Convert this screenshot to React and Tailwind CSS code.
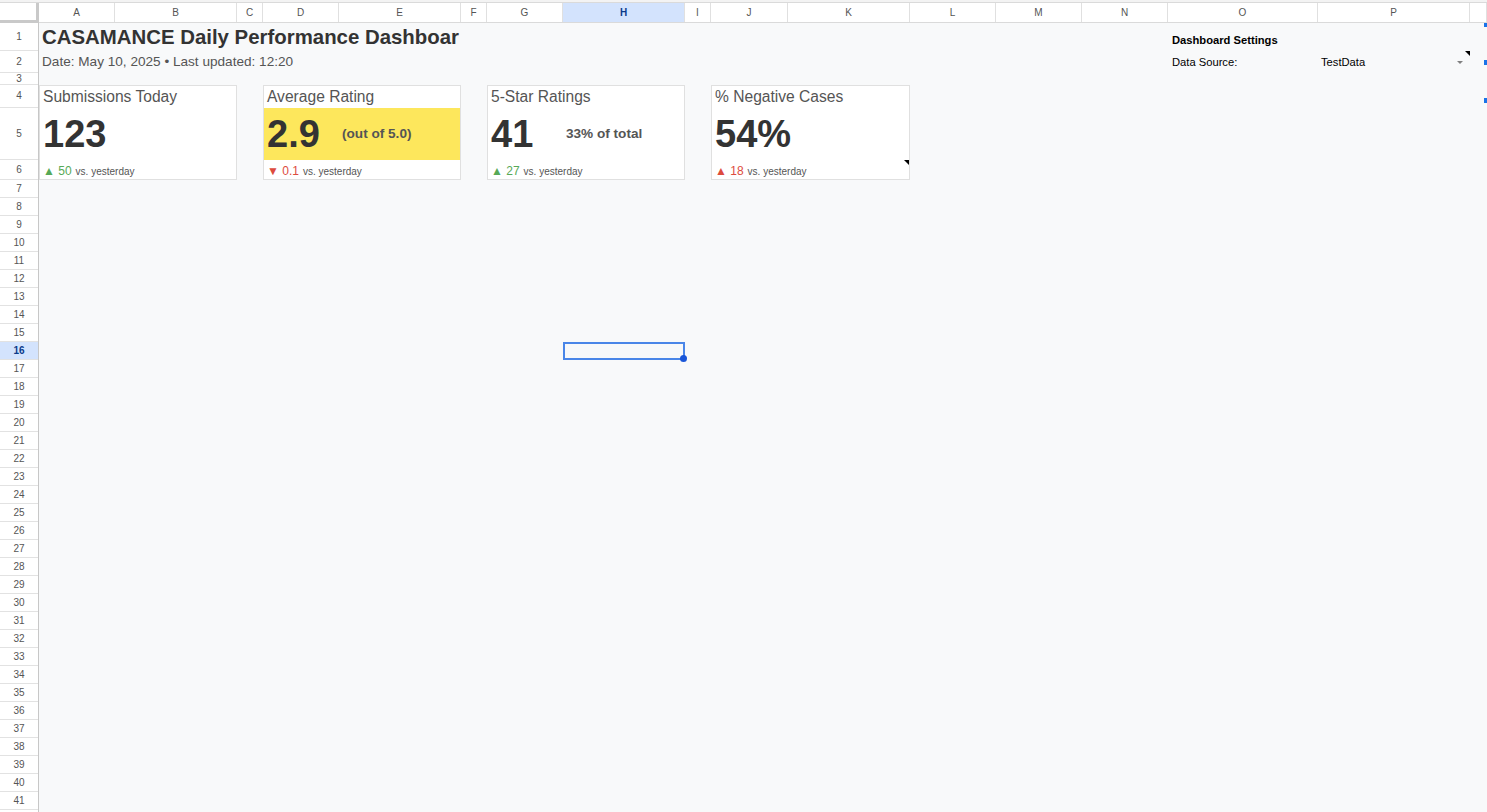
import React from 'react';

const COLS = ['A','B','C','D','E','F','G','H','I','J','K','L','M','N','O','P',''];
const ROWS = [];
for (let i = 1; i <= 42; i++) ROWS.push(i);

function Delta({ up, color, value }) {
  return (
    <div className="col-span-2 flex items-baseline pl-[3px] pt-[2px] whitespace-nowrap">
      <span className={'text-[12px] ' + color}>{up ? '▲' : '▼'} {value}</span>
      <span className="text-[10px] text-[#555555] ml-[4px]">vs. yesterday</span>
    </div>
  );
}

function Card({ place, title, value, side, delta, up, color, yellow, note }) {
  return (
    <div className={place + ' bg-white border border-[#e0e0e0] grid grid-rows-[22px_52px_1fr] grid-cols-[75px_1fr] relative'}>
      <div className="col-span-2 flex items-center pl-[3px] text-[15.6px] leading-none text-[#555555] whitespace-nowrap">{title}</div>
      <div className={'col-span-2 grid grid-cols-[75px_1fr] items-center ' + (yellow ? 'bg-[#fde75c]' : '')}>
        <div className="pl-[3px] text-[38px] leading-none font-bold text-[#333333] whitespace-nowrap">{value}</div>
        {side ? <div className="pl-[3px] text-[13.6px] font-bold text-[#555555] whitespace-nowrap">{side}</div> : <div />}
      </div>
      <Delta up={up} color={color} value={delta} />
      {note ? <div className="absolute right-0 top-[74px] w-0 h-0 border-l-[5px] border-l-transparent border-t-[5px] border-t-black" /> : null}
    </div>
  );
}

export default function App() {
  return (
    <div className="relative w-[1487px] h-[812px] overflow-hidden bg-white font-['Liberation_Sans',Arial,sans-serif]">
      <div className="pt-[2px] bg-[#f3f3f3]">
        <div className="h-[21px] grid grid-cols-[39px_76px_122px_26px_76px_122px_26px_76px_122px_26px_77px_122px_86px_86px_86px_150px_152px_1fr] border-t border-b border-[#dadada] bg-white">
          <div className="border-r-[3px] border-b-[3px] border-[#c9c9c9] -mb-px bg-white" />
          {COLS.map((c, i) => (
            <div
              key={i}
              className={
                'flex items-center justify-center text-[10px] border-r border-[#e0e0e0] ' +
                (c === 'H' ? 'bg-[#d3e3fd] text-[#0b3a8a] font-bold' : 'text-[#555555]')
              }
            >
              {c}
            </div>
          ))}
        </div>
      </div>

      <div className="flex items-start">
        <div className="w-[39px] shrink-0 border-r border-[#c7c7c7] bg-white grid grid-rows-[28px_22px_12px_23px_52px_20px_repeat(36,18px)]">
          {ROWS.map((r) => (
            <div
              key={r}
              className={
                'flex items-center justify-center text-[10px] border-b border-[#e2e2e2] leading-none ' +
                (r === 16 ? 'bg-[#d3e3fd] text-[#0b3a8a] font-bold' : 'text-[#555555]')
              }
            >
              {r <= 41 ? r : ''}
            </div>
          ))}
        </div>

        <div className="flex-1 bg-[#f8f9fa] grid grid-cols-[76px_122px_26px_76px_122px_26px_76px_122px_26px_77px_122px_86px_86px_86px_150px_152px_1fr] grid-rows-[28px_22px_12px_23px_52px_20px_repeat(36,18px)]">
          <div className="col-start-1 col-span-5 row-start-1 flex items-center pl-[3px] overflow-hidden whitespace-nowrap text-[20.4px] font-bold text-[#333333] leading-none">
            CASAMANCE Daily Performance Dashboar
          </div>
          <div className="col-start-1 col-span-5 row-start-2 flex items-center pl-[3px] whitespace-nowrap text-[13.6px] text-[#555555]">
            Date: May 10, 2025 • Last updated: 12:20
          </div>

          <div className="col-start-15 row-start-1 flex items-end pb-[2px] pl-[4px] whitespace-nowrap text-[11.2px] font-bold text-black">
            Dashboard Settings
          </div>
          <div className="col-start-15 row-start-2 flex items-center pl-[4px] whitespace-nowrap text-[11.2px] text-black">
            Data Source:
          </div>
          <div className="col-start-16 row-start-2 relative flex items-center pl-[3px] whitespace-nowrap text-[11.2px] text-black">
            TestData
            <div className="absolute right-[7px] top-[10px] w-0 h-0 border-l-[3px] border-r-[3px] border-l-transparent border-r-transparent border-t-[3px] border-t-[#808080]" />
            <div className="absolute right-0 top-0 w-0 h-0 border-l-[5px] border-l-transparent border-t-[5px] border-t-black" />
          </div>

          <Card
            place="col-start-1 col-span-2 row-start-4 row-span-3"
            title="Submissions Today"
            value="123"
            delta="50"
            up
            color="text-[#57a957]"
          />
          <Card
            place="col-start-4 col-span-2 row-start-4 row-span-3"
            title="Average Rating"
            value="2.9"
            side="(out of 5.0)"
            delta="0.1"
            color="text-[#dd4b3e]"
            yellow
          />
          <Card
            place="col-start-7 col-span-2 row-start-4 row-span-3"
            title="5-Star Ratings"
            value="41"
            side="33% of total"
            delta="27"
            up
            color="text-[#57a957]"
          />
          <Card
            place="col-start-10 col-span-2 row-start-4 row-span-3"
            title="% Negative Cases"
            value="54%"
            delta="18"
            up
            color="text-[#dd4b3e]"
            note
          />

          <div className="col-start-8 row-start-16 relative border-2 border-[#4a86e8]">
            <div className="absolute -right-[4px] -bottom-[4px] w-[7px] h-[7px] rounded-full bg-[#1a56d8]" />
          </div>
        </div>
      </div>

      <div className="absolute right-0 top-[23px] w-[3px] h-[4px] bg-[#1a73e8]" />
      <div className="absolute right-0 top-[60px] w-[3px] h-[5px] bg-[#1a73e8]" />
      <div className="absolute right-0 top-[98px] w-[3px] h-[5px] bg-[#1a73e8]" />
    </div>
  );
}
